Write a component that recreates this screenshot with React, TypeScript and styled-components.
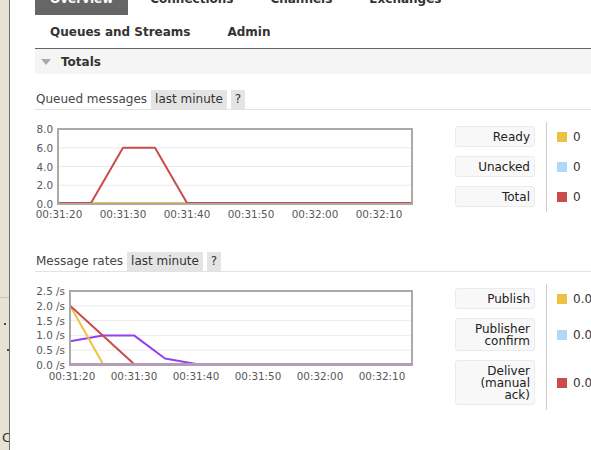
import React from 'react'
import styled, { createGlobalStyle } from 'styled-components'

const GlobalStyle = createGlobalStyle`
  html, body {
    margin: 0;
    padding: 0;
    overflow: hidden;
    background: #fff;
  }
  body {
    font-family: "DejaVu Sans", Verdana, sans-serif;
    font-size: 12px;
    color: #333;
  }
`

const Desktop = styled.div`
  display: flex;
  width: 591px;
  height: 450px;
  overflow: hidden;
`

// the bit of desktop that peeks out left of the browser window
const Backdrop = styled.div`
  position: relative;
  flex: 0 0 9px;
  background: #e8e2d3;
  border-right: 1px solid #6e6e6e;
  overflow: hidden;
`

const BackdropRule = styled.div`
  position: absolute;
  left: 0;
  right: 0;
  top: 297px;
  border-top: 1px solid #cbc3b2;
`

const BackdropMark = styled.span<{ $top: number; $left: number }>`
  position: absolute;
  top: ${p => p.$top}px;
  left: ${p => p.$left}px;
  width: 2px;
  height: 2px;
  background: #4a4a4a;
`

const BackdropGlyph = styled.span`
  position: absolute;
  top: 430px;
  left: 2px;
  font-size: 13px;
  color: #333;
`

const Main = styled.main`
  flex: 1;
  min-width: 0;
  padding-left: 25px;
  overflow: hidden;
`

const Tabs = styled.ul`
  display: flex;
  flex-wrap: wrap;
  list-style: none;
  margin: -18px 0 0;
  padding: 0;
  border-bottom: 1px solid #666;
`

const Tab = styled.li<{ $active?: boolean }>`
  margin-right: 7px;
  padding: 2px 15px 0;
  height: 31px;
  line-height: 31px;
  font-weight: bold;
  white-space: nowrap;
  color: ${p => (p.$active ? '#fff' : '#333')};
  background: ${p => (p.$active ? '#666' : 'transparent')};
`

const SectionHeader = styled.h2`
  display: flex;
  align-items: center;
  gap: 10px;
  margin: 0;
  height: 25px;
  padding-left: 6px;
  background: #f5f5f5;
  font-size: 12px;
  font-weight: bold;
  color: #333;
`

const Caret = styled.span`
  width: 0;
  height: 0;
  border-left: 5px solid transparent;
  border-right: 5px solid transparent;
  border-top: 6px solid #aaa;
`

const ChartBlock = styled.section`
  margin-top: 16px;

  & + & {
    margin-top: 30px;
  }
`

const ChartHeader = styled.h3`
  display: flex;
  gap: 4px;
  margin: 0;
  padding-left: 1px;
  font-size: 12px;
  font-weight: normal;
  line-height: 19px;
  color: #464646;
  border-bottom: 1px solid #e2e2e2;
`

const Pill = styled.span`
  padding: 0 4px;
  background: #e4e4e4;
  color: #333;
`

const ChartRow = styled.div`
  display: flex;
  align-items: flex-start;
  margin-top: 12px;
`

const Legend = styled.table`
  border-collapse: collapse;
  margin-left: 30px;
`

const LegendLabel = styled.th`
  padding: 4px 11px 5px 0;
  font-weight: normal;
`

const LabelBox = styled.div`
  box-sizing: border-box;
  width: 80px;
  padding: 4px 4px 3px;
  line-height: 12px;
  text-align: right;
  color: #222;
  background: #f8f8f8;
  border: 1px solid #ebebeb;
  border-radius: 3px;
`

const LegendValue = styled.td`
  padding: 0 0 0 10px;
  border-left: 1px solid #ccc;
  white-space: nowrap;
  vertical-align: middle;
  color: #333;
`

const Swatch = styled.span<{ $color: string }>`
  display: inline-block;
  width: 10px;
  height: 10px;
  margin-right: 6px;
  vertical-align: -1px;
  background: ${p => p.$color};
`

const flot = {
  yellow: '#edc240',
  blue: '#afd8f8',
  red: '#cb4b4b',
  purple: '#9440ed',
}

interface Series {
  color: string
  data: [number, number][] // [seconds after 00:31:20, value]
}

interface ChartProps {
  left: number
  right: number
  top: number
  bottom: number
  origin: number // px of 00:31:20
  pxPerSec: number
  max: number
  yTicks: number[]
  unit?: string
  series: Series[]
  baseline?: string
}

const times = ['00:31:20', '00:31:30', '00:31:40', '00:31:50', '00:32:00', '00:32:10']

const Chart = ({ left, right, top, bottom, origin, pxPerSec, max, yTicks, unit, series, baseline }: ChartProps) => {
  const sx = (t: number) => origin + t * pxPerSec
  const sy = (v: number) => bottom - (v / max) * (bottom - top)
  const clipId = `plot-${left}-${max}`

  return (
    <svg width={390} height={100} style={{ flex: 'none' }} fontFamily='"DejaVu Sans", Verdana, sans-serif' fontSize={10.4} fill="#585858">
      <defs>
        <clipPath id={clipId}>
          <rect x={left} y={top} width={right - left} height={bottom - top} />
        </clipPath>
      </defs>
      {yTicks.map(v => (
        <g key={v}>
          {v > 0 && v < max && <line x1={left} x2={right} y1={sy(v)} y2={sy(v)} stroke="#ebebeb" />}
          <text x={left - 5} y={sy(v) + 4} textAnchor="end">
            {v.toFixed(1)}{unit ? ` ${unit}` : ''}
          </text>
        </g>
      ))}
      {times.map((label, i) => (
        <text key={label} x={sx(i * 10)} y={96} textAnchor="middle">{label}</text>
      ))}
      <g clipPath={`url(#${clipId})`}>
        {series.map((s, i) => (
          <polyline
            key={i}
            points={s.data.map(([t, v]) => `${sx(t)},${Math.min(sy(v), bottom - 1)}`).join(' ')}
            fill="none"
            stroke={s.color}
            strokeWidth={2}
            strokeLinejoin="round"
          />
        ))}
      </g>
      <rect x={left} y={top} width={right - left} height={bottom - top} fill="none" stroke="#aaa" strokeWidth={2} />
      {baseline && <line x1={left - 1} x2={right + 1} y1={bottom - 0.5} y2={bottom - 0.5} stroke={baseline} strokeWidth={3} />}
    </svg>
  )
}

interface LegendRow {
  label: React.ReactNode
  color: string
  value: string
}

const ChartLegend = ({ rows }: { rows: LegendRow[] }) => (
  <Legend>
    <tbody>
      {rows.map((r, i) => (
        <tr key={i}>
          <LegendLabel>
            <LabelBox>{r.label}</LabelBox>
          </LegendLabel>
          <LegendValue>
            <Swatch $color={r.color} />
            {r.value}
          </LegendValue>
        </tr>
      ))}
    </tbody>
  </Legend>
)

const queued: Series[] = [
  { color: flot.yellow, data: [[-2, 0], [60, 0]] },
  { color: flot.blue, data: [[-2, 0], [5, 0]] },
  { color: flot.red, data: [[-2, 0], [5, 0], [10, 6], [15, 6], [20, 0], [60, 0]] },
]

const rates: Series[] = [
  { color: flot.purple, data: [[-0.3, 0.8], [5, 1], [10, 1], [15, 0.22], [20, 0], [60, 0]] },
  { color: flot.yellow, data: [[-0.3, 2], [5, 0], [60, 0]] },
  { color: flot.red, data: [[-0.3, 2], [10, 0], [60, 0]] },
]

export default function App() {
  return (
    <>
      <GlobalStyle />
      <Desktop>
        <Backdrop>
          <BackdropRule />
          <BackdropMark $top={323} $left={4} />
          <BackdropMark $top={349} $left={7} />
          <BackdropGlyph>C</BackdropGlyph>
        </Backdrop>
        <Main>
          <Tabs>
            <Tab $active>Overview</Tab>
            <Tab>Connections</Tab>
            <Tab>Channels</Tab>
            <Tab>Exchanges</Tab>
            <Tab>Queues and Streams</Tab>
            <Tab>Admin</Tab>
          </Tabs>

          <SectionHeader>
            <Caret />
            Totals
          </SectionHeader>

          <ChartBlock>
            <ChartHeader>
              Queued messages <Pill>last minute</Pill> <Pill>?</Pill>
            </ChartHeader>
            <ChartRow>
              <Chart left={23} right={377} top={7} bottom={82} origin={24} pxPerSec={6.4} max={8} yTicks={[0, 2, 4, 6, 8]} series={queued} />
              <ChartLegend
                rows={[
                  { label: 'Ready', color: flot.yellow, value: '0' },
                  { label: 'Unacked', color: flot.blue, value: '0' },
                  { label: 'Total', color: flot.red, value: '0' },
                ]}
              />
            </ChartRow>
          </ChartBlock>

          <ChartBlock>
            <ChartHeader>
              Message rates <Pill>last minute</Pill> <Pill>?</Pill>
            </ChartHeader>
            <ChartRow>
              <Chart
                left={35}
                right={377}
                top={7}
                bottom={81}
                origin={37}
                pxPerSec={6.2}
                max={2.5}
                yTicks={[0, 0.5, 1, 1.5, 2, 2.5]}
                unit="/s"
                series={rates}
                baseline="#b59cba"
              />
              <ChartLegend
                rows={[
                  { label: 'Publish', color: flot.yellow, value: '0.00/s' },
                  { label: <>Publisher<br />confirm</>, color: flot.blue, value: '0.00/s' },
                  { label: <>Deliver<br />(manual<br />ack)</>, color: flot.red, value: '0.00/s' },
                ]}
              />
            </ChartRow>
          </ChartBlock>
        </Main>
      </Desktop>
    </>
  )
}
